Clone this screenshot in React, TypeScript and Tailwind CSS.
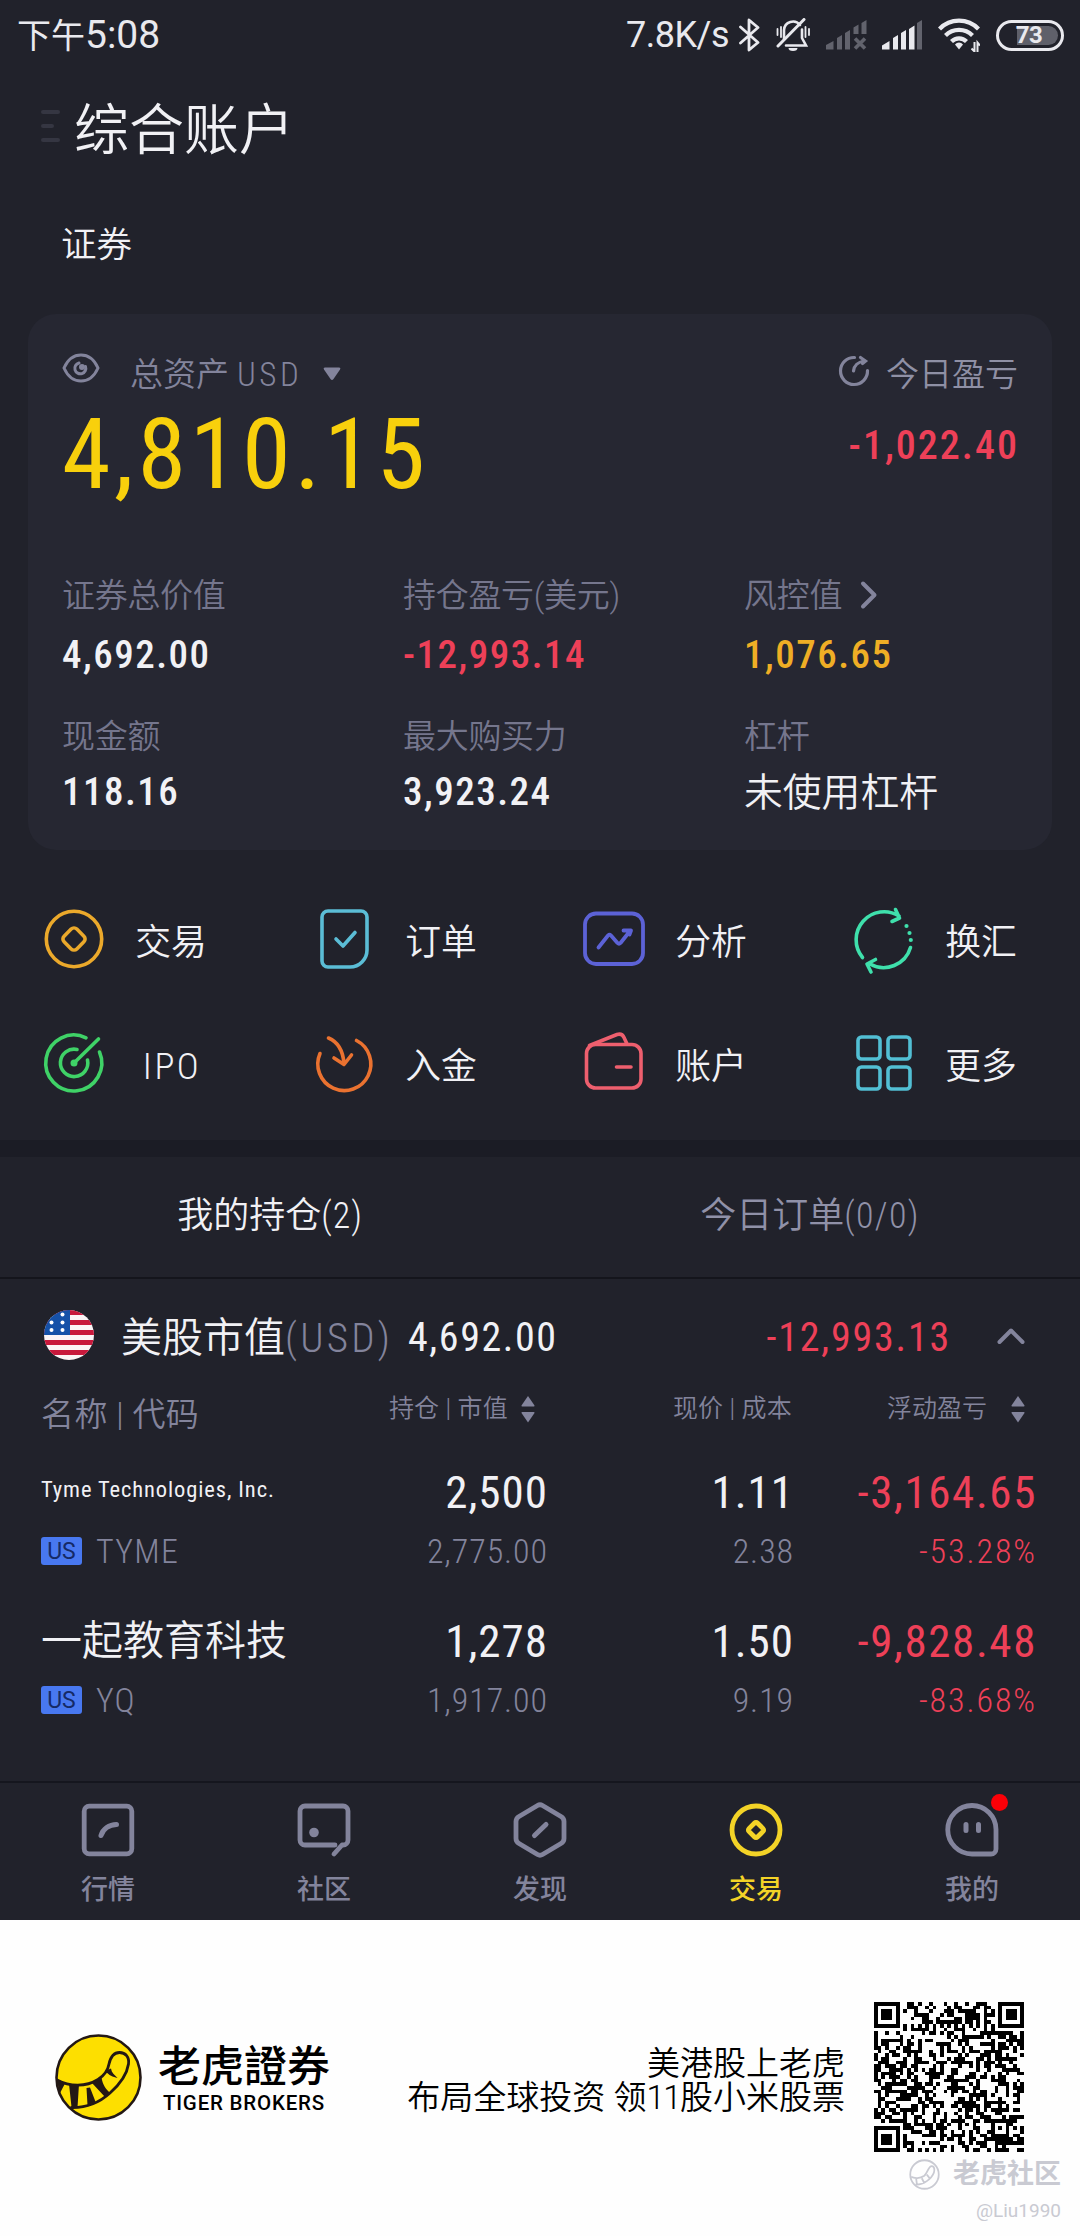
import React from "react";

const stats = [
  [
    { label: "证券总价值", value: "4,692.00", color: "text-[#f1f1f5]" },
    { label: "持仓盈亏(美元)", value: "-12,993.14", color: "text-[#ee4058]" },
    { label: "风控值", value: "1,076.65", color: "text-[#efae25]", arrow: true },
  ],
  [
    { label: "现金额", value: "118.16", color: "text-[#f1f1f5]" },
    { label: "最大购买力", value: "3,923.24", color: "text-[#f1f1f5]" },
    { label: "杠杆", value: "未使用杠杆", color: "text-[#f1f1f5]", plain: true },
  ],
];

const positions = [
  {
    name: "Tyme Technologies, Inc.",
    small: true,
    code: "TYME",
    amount: "2,500",
    market: "2,775.00",
    price: "1.11",
    cost: "2.38",
    profit: "-3,164.65",
    percent: "-53.28%",
  },
  {
    name: "一起教育科技",
    small: false,
    code: "YQ",
    amount: "1,278",
    market: "1,917.00",
    price: "1.50",
    cost: "9.19",
    profit: "-9,828.48",
    percent: "-83.68%",
  },
];

// icons of the shortcut grid, all on a 72x72 box
const TradeIcon = () => (
  <svg width="72" height="72" viewBox="0 0 72 72" fill="none" stroke="#eba92b" strokeWidth="3.6">
    <circle cx="36" cy="36" r="27.7" />
    <rect x="27" y="27" width="18" height="18" rx="4" transform="rotate(45 36 36)" />
  </svg>
);

const OrderIcon = () => (
  <svg width="72" height="72" viewBox="0 0 72 72" fill="none" stroke="#5bbdd6" strokeWidth="3.6" strokeLinecap="round" strokeLinejoin="round">
    <path d="M20 8h33a6 6 0 0 1 6 6v33a17 17 0 0 1-17 17H20a6 6 0 0 1-6-6V14a6 6 0 0 1 6-6z" />
    <path d="M28 36l7 7 12-13.500" />
  </svg>
);

const AnalysisIcon = () => (
  <svg width="72" height="72" viewBox="0 0 72 72" fill="none" stroke="#5c62d6" strokeWidth="3.8" strokeLinecap="round" strokeLinejoin="round">
    <rect x="7" y="10.500" width="58" height="50.500" rx="11" />
    <path d="M20.500 44.500l9.500-12q1.500-1.500 3 0l6.500 7.500q1.500 1.500 3 0L52 28M45.500 27.500h7.500l-1.500 4" />
  </svg>
);

const ExchangeIcon = () => (
  <svg width="72" height="72" viewBox="0 0 72 72" fill="none" stroke="#3fe0ac" strokeWidth="3.6" strokeLinecap="round" strokeLinejoin="round">
    <path d="M14.500 54.500A28 28 0 0 1 51 13M47.500 6.500l4 8.500-7.500 3.500" />
    <path d="M62.500 44.500A28 28 0 0 1 22 61M27.500 56.500l-8.500 4.500 4 8" />
    <path d="M58.500 23v.01M61.500 30v.01M62.800 37v.01" strokeWidth="4.200" />
  </svg>
);

const IpoIcon = () => (
  <svg width="72" height="72" viewBox="0 0 72 72" fill="none" stroke="#3fd267" strokeWidth="3.6" strokeLinecap="round">
    <path d="M48 10.800A28 28 0 1 0 61.500 25" />
    <path d="M39 22.500A13.700 13.700 0 1 0 49.500 33" />
    <path d="M36 36l24.500-24" />
    <circle cx="36" cy="36" r="3.500" fill="#3fd267" stroke="none" />
  </svg>
);

const DepositIcon = () => (
  <svg width="72" height="72" viewBox="0 0 72 72" fill="none" stroke="#ea7230" strokeWidth="3.6" strokeLinecap="round" strokeLinejoin="round">
    <path d="M12 26.500A26.500 26.500 0 1 0 48.500 13.500" />
    <path d="M20.500 11C30 15 35 24 36 36.500M26 31l10 6.500L43.500 28" />
  </svg>
);

const AccountIcon = () => (
  <svg width="72" height="72" viewBox="0 0 72 72" fill="none" stroke="#ee5f6e" strokeWidth="3.6" strokeLinecap="round" strokeLinejoin="round">
    <rect x="8.500" y="17.500" width="54.500" height="43.500" rx="9" />
    <path d="M11.500 18.500L39 7.500q5-1.500 7 3l3 6.500M38.500 40h14.500" />
  </svg>
);

const MoreIcon = () => (
  <svg width="72" height="72" viewBox="0 0 72 72" fill="none" stroke="#52bfd4" strokeWidth="3.6">
    <rect x="10" y="10" width="22" height="22" rx="3.500" />
    <rect x="40" y="10" width="22" height="22" rx="3.500" />
    <rect x="10" y="40" width="22" height="22" rx="3.500" />
    <rect x="40" y="40" width="22" height="22" rx="3.500" />
  </svg>
);

const shortcuts = [
  { title: "交易", icon: <TradeIcon /> },
  { title: "订单", icon: <OrderIcon /> },
  { title: "分析", icon: <AnalysisIcon /> },
  { title: "换汇", icon: <ExchangeIcon /> },
  { title: "IPO", icon: <IpoIcon /> },
  { title: "入金", icon: <DepositIcon /> },
  { title: "账户", icon: <AccountIcon /> },
  { title: "更多", icon: <MoreIcon /> },
];

// bottom navigation, icons on a 64x64 box
const tabs = [
  {
    title: "行情",
    icon: (
      <>
        <rect x="8.200" y="8.200" width="47.600" height="47.600" rx="5" />
        <path d="M25 37.500C27 31 33 26.500 40.500 26.500" strokeWidth="5" />
      </>
    ),
  },
  {
    title: "社区",
    icon: (
      <>
        <path d="M43 47H13a5 5 0 0 1-5-5V13a5 5 0 0 1 5-5h38a5 5 0 0 1 5 5v29a5 5 0 0 1-5 5h-1l-8 9" />
        <circle cx="22" cy="34.500" r="4.800" fill="#83849c" stroke="none" />
      </>
    ),
  },
  {
    title: "发现",
    icon: (
      <>
        <path d="M29.500 7.500q2.500-1.500 5 0l18.500 11q3 1.700 3 5v17q0 3.300-3 5l-18.500 11q-2.500 1.500-5 0L11 45.500q-3-1.700-3-5v-17q0-3.300 3-5z" />
        <path d="M26.500 37.500L38 26.500" strokeWidth="5" />
      </>
    ),
  },
  {
    title: "交易",
    active: true,
    icon: (
      <>
        <circle cx="32" cy="32" r="24" />
        <rect x="26" y="26" width="12" height="12" rx="2" transform="rotate(45 32 32)" />
      </>
    ),
  },
  {
    title: "我的",
    dot: true,
    icon: (
      <>
        <path d="M32 7.500A24 24 0 0 1 56 31.500V51a5 5 0 0 1-5 5H32A24.200 24.200 0 0 1 32 7.500z" />
        <path d="M26 26.500v6M38.500 26.500v6" strokeWidth="5" />
      </>
    ),
  },
];

const Sort = () => (
  <svg width="14" height="28" viewBox="0 0 14 28" fill="#83849c">
    <path d="M7 1l6.500 9.500a.8.8 0 0 1-.7 1H1.200a.8.8 0 0 1-.7-1z" />
    <path d="M7 27.500l6.500-9.500a.8.8 0 0 0-.7-1H1.200a.8.8 0 0 0-.7 1z" />
  </svg>
);

const Flag = () => (
  <svg width="50" height="50" viewBox="0 0 50 50">
    <clipPath id="flag">
      <circle cx="25" cy="25" r="25" />
    </clipPath>
    <g clipPath="url(#flag)">
      <rect width="50" height="50" fill="#fbf4f6" />
      <path d="M0 2.500h50M0 12.500h50M0 22.500h50M0 32.500h50M0 42.500h50" stroke="#c8193c" strokeWidth="5" />
      <rect width="26" height="25" fill="#1551a8" />
      <g fill="#ffffff">
        <circle cx="18.500" cy="4.500" r="2" />
        <circle cx="7.500" cy="12.500" r="2" />
        <circle cx="18.500" cy="12.500" r="2" />
        <circle cx="7.500" cy="20" r="2" />
        <circle cx="18.500" cy="20" r="2" />
      </g>
    </g>
  </svg>
);

const StatusIcons = () => (
  <>
    <svg width="21" height="34" viewBox="0 0 21 34" fill="none" stroke="#e9e9ee" strokeWidth="2.800" strokeLinejoin="round" strokeLinecap="round">
      <path d="M1.500 9L19 24.500 10 32V2l9 7.500L1.500 25" />
    </svg>
    <svg className="ml-4" width="34" height="34" viewBox="0 0 34 34" fill="none" stroke="#e9e9ee" strokeWidth="2.600" strokeLinecap="round">
      <path d="M8 21V12a9 9 0 0 1 16-5M26 11.500V20l4 7.500H10" />
      <path d="M2 28L28 1.500" strokeWidth="3" />
      <path d="M1.500 11v6M5 9v10M33 11v6M29.500 9v10" strokeWidth="1.800" />
      <path d="M12.500 30h9a4.500 3 0 0 1-9 0z" fill="#e9e9ee" stroke="none" />
    </svg>
    <svg className="ml-4" width="41" height="30" viewBox="0 0 41 30" fill="#62636d">
      <path d="M0 25l7.500-4v8.500H0zM11 18l5-3v14.500h-5zM19 13l5-3v19.500h-5zM27.500 7.500l5-3V14h-5zM35.500 3l5-3v14h-5z" />
      <path d="M29 18.500l10 10M39 18.500l-10 10" stroke="#62636d" strokeWidth="3.600" />
    </svg>
    <svg className="ml-[15px]" width="40" height="30" viewBox="0 0 40 30" fill="#e9e9ee">
      <path d="M0 25.500l7.500-4.500v8.500H0zM11 18l5-3v14.500h-5zM19 13l5-3v19.500h-5zM27 9l5.500-3.500v24H27z" />
      <path d="M35 3l5-3v29.500h-5z" fill="#62636d" />
    </svg>
    <svg className="ml-4" width="42" height="34" viewBox="0 0 42 34" fill="none" stroke="#e9e9ee" strokeWidth="4.200">
      <path d="M1.500 11a27 27 0 0 1 39 0M7.500 17.500a19 19 0 0 1 27 0M13.500 23.500a10.500 10.500 0 0 1 15 0" />
      <path d="M21 24.500a6 6 0 0 1 4 2l-4 5-4-5a6 6 0 0 1 4-2z" fill="#e9e9ee" stroke="none" />
      <path d="M36.500 24v9.500l-3-3M39.500 34v-9.500l2.500 3" strokeWidth="2" />
    </svg>
    <div className="relative ml-4 flex h-[31px] w-[68px] items-center justify-center rounded-full border-[3px] border-[#e9e9ee] p-[3px]">
      <div className="absolute top-[3px] right-[3px] h-[19px] w-[41px] rounded-r-full bg-[#5f606a]" />
      <span className="relative -ml-0.5 text-[24px] leading-none font-bold tracking-[-0.5px]">73</span>
    </div>
  </>
);

const TigerLogo = () => (
  <svg width="87" height="87" viewBox="0 0 87 87">
    <circle cx="43.500" cy="43.500" r="42" fill="#fddf00" stroke="#231815" strokeWidth="2.600" />
    <path d="M2 46C15 53 31 53 43 45.500C50 41 53 36 54 30C56 21 60 18.500 64.500 18.500C70.500 18.500 74.500 23 73.500 30C72 40 64 51 55 59C44 69 30 74 15.500 73.500" fill="none" stroke="#231815" strokeWidth="2.800" />
    <g fill="#231815">
      <path d="M2 45l8 4.500L4.500 60zM14 50h10l-1.500 23.500-6-.5zM31.500 54l3.500-.5 6 15.500-8.500 2.500zM37 49l9.500-5.500C48 52 51 55 55.500 59.500L50 63zM50 37l6-2.500c.5 4 3 6 6.500 9.500-5-1-8-2.500-12.500-7z" />
    </g>
  </svg>
);

const SIZE = 41;

// finder squares in three corners, alignment square at (34, 34), data in between
const isDark = (x: number, y: number, noise: number) => {
  const corners = [
    [0, 0],
    [SIZE - 7, 0],
    [0, SIZE - 7],
  ];
  for (const [cx, cy] of corners) {
    const d = Math.max(Math.abs(x - cx - 3), Math.abs(y - cy - 3));
    if (d <= 4) return d === 3 || d <= 1;
  }
  const a = Math.max(Math.abs(x - 34), Math.abs(y - 34));
  if (a <= 2) return a !== 1;
  if (y === 6) return x % 2 === 0;
  if (x === 6) return y % 2 === 0;
  return noise > 0.49;
};

const QrCode = () => {
  let seed = 4810;
  let d = "";
  for (let y = 0; y < SIZE; y++) {
    for (let x = 0; x < SIZE; x++) {
      seed = (seed * 16807) % 2147483647;
      if (isDark(x, y, seed / 2147483647)) d += `M${x} ${y}h1v1h-1z`;
    }
  }
  return (
    <svg width="150" height="150" viewBox="0 0 41 41" shapeRendering="crispEdges">
      <path d={d} fill="#000000" />
    </svg>
  );
};

export default function App() {
  return (
    <div className="w-[1080px] bg-[#21222b] font-[Roboto,'Noto_Sans_CJK_SC',sans-serif] text-[#f1f1f5]">
      <div className="flex h-[70px] items-center justify-between pr-4 pl-[17px] text-[#e9e9ee]">
        <div className="text-[39px] leading-none">
          <span className="text-[34px]">下午</span>5:08
        </div>
        <div className="flex items-center">
          <div className="w-[113px] text-[36px] leading-none tracking-[-0.5px] whitespace-nowrap">7.8K/s</div>
          <StatusIcons />
        </div>
      </div>

      <div className="flex h-[120px] items-center pl-[41px]">
        <div className="mt-[-8px] flex w-[33px] flex-col gap-[10px]">
          <div className="h-1 w-[19px] rounded bg-[#353642]" />
          <div className="h-1 w-[13px] rounded bg-[#353642]" />
          <div className="h-1 w-[19px] rounded bg-[#353642]" />
        </div>
        <h1 className="text-[55px] leading-none font-[350]">综合账户</h1>
      </div>

      <div className="flex h-[108px] items-center pt-[4px] pl-[61px] text-[35.500px] leading-none font-[350]">证券</div>

      {/* account card */}
      <div className="mx-7 mt-4 h-[536px] rounded-[28px] bg-[#262732] px-[34px] pt-[35px]">
        <div className="flex justify-between">
          <div>
            <div className="flex h-[50px] items-center text-[33px] leading-none font-[350] text-[#83849c]">
              <svg className="mt-[-12px]" width="38" height="30" viewBox="0 0 38 30" fill="none" stroke="#83849c" strokeWidth="3">
                <path d="M2 15C6 6 12 2 19 2s13 4 17 13c-4 9-10 13-17 13S6 24 2 15z" />
                <path d="M17 10a5.500 5.500 0 1 0 6.500 3.500" strokeLinecap="round" />
                <circle cx="20" cy="14" r="1.500" fill="#83849c" />
              </svg>
              <span className="ml-[30px]">
                总资产 <span className="font-light tracking-[3.500px] font-stretch-[75%]">USD</span>
              </span>
              <svg className="ml-[21px]" width="18" height="14" viewBox="0 0 18 14" fill="#83849c">
                <path d="M2 .5h14q2 0 1 2L10.500 12q-1.500 2-3 0L1 2.500q-1-2 1-2z" />
              </svg>
            </div>
            <div className="h-[109px] text-[98.500px] leading-[112px] tracking-[3.700px] font-stretch-[75%] text-[#f8d00c]">
              4,810.15
            </div>
          </div>
          <div className="text-right">
            <div className="flex h-[50px] items-center text-[33px] leading-none font-[350] text-[#8f90a5]">
              <svg className="mt-[-6px] mr-[16px]" width="32" height="32" viewBox="0 0 32 32" fill="none" stroke="#83849c" strokeWidth="3.200" strokeLinecap="round">
                <path d="M16.500 2.500A13.500 13.500 0 1 0 29.500 15.500" />
                <path d="M15.500 16C16 11 20 7 26 6M22.500 2.500L27.500 6l-3 2.500" />
              </svg>
              今日盈亏
            </div>
            <div className="-mr-px text-[40px] leading-[93px] font-medium tracking-[2px] font-stretch-[75%] text-[#ee4058]">
              -1,022.40
            </div>
          </div>
        </div>

        <div className="mt-[62px] flex flex-col gap-5">
          {stats.map((row, i) => (
            <div className="flex" key={i}>
              {row.map((item: any) => (
                <div className="w-[341px] shrink-0 last:w-[270px]" key={item.label}>
                  <div className="flex h-[50px] items-center text-[33px] leading-none font-[350] tracking-[-0.300px] whitespace-nowrap text-[#75768d]">
                    {item.label}
                    {item.arrow && (
                      <svg className="ml-[18px]" width="18" height="30" viewBox="0 0 18 30" fill="none" stroke="#83849c" strokeWidth="4" strokeLinecap="round" strokeLinejoin="round">
                        <path d="M3 3.500L14.500 15 3 26.500" />
                      </svg>
                    )}
                  </div>
                  <div
                    className={
                      (i === 0 ? "leading-[71px] " : "leading-[63px] ") +
                      (item.plain
                        ? "text-[38.800px] font-[350] "
                        : "text-[39px] font-medium tracking-[1.500px] font-stretch-[75%] ") +
                      item.color
                    }
                  >
                    {item.value}
                  </div>
                </div>
              ))}
            </div>
          ))}
        </div>
      </div>

      <div className="grid grid-cols-4 pt-[27px] pb-[15px]">
        {shortcuts.map((item) => (
          <div className="flex h-[124px] items-center pl-[38px]" key={item.title}>
            {item.icon}
            <div
              className={
                item.title === "IPO"
                  ? "ml-[26px] w-[72px] pt-[7px] text-center text-[37px] leading-none font-light tracking-[2.500px] font-stretch-[75%]"
                  : "ml-[25px] w-[72px] pt-[10px] text-center text-[35.800px] leading-none font-[350]"
              }
            >
              {item.title}
            </div>
          </div>
        ))}
      </div>

      <div className="h-[17px] bg-[#1b1c25]" />

      <div className="flex h-[122px] items-center border-b-2 border-[#14151c] pb-[3px] text-[36px] leading-none font-[350]">
        <div className="w-1/2 text-center">
          我的持仓<span className="tracking-[1px] font-stretch-[75%]">(2)</span>
        </div>
        <div className="w-1/2 text-center text-[#9091a8]">
          今日订单<span className="tracking-[1.300px] font-stretch-[75%]">(0/0)</span>
        </div>
      </div>

      {/* positions */}
      <div className="flex h-[106px] items-center pt-[12px] pl-11 text-[41px] leading-none">
        <div className="-mt-[6px]">
          <Flag />
        </div>
        <div className="ml-[27px] w-[287px] whitespace-nowrap">
          <span className="font-[350]">美股市值</span>
          <span className="font-light tracking-[3.200px] font-stretch-[75%] text-[#83849c]">(USD)</span>
        </div>
        <div className="text-[40px] tracking-[1.600px] font-stretch-[75%]">4,692.00</div>
        <div className="ml-auto text-[40px] tracking-[1.800px] font-stretch-[75%] text-[#ee4058]">-12,993.13</div>
        <svg className="mt-[-4px] mr-[54px] ml-[45px]" width="30" height="20" viewBox="0 0 30 20" fill="none" stroke="#83849c" strokeWidth="4" strokeLinecap="round" strokeLinejoin="round">
          <path d="M3.500 16L15 4.500 26.500 16" />
        </svg>
      </div>

      <div className="flex h-[50px] items-center pb-[3px] pl-[41px] text-[25px] leading-none font-[350] text-[#83849c]">
        <div className="w-[285px] pt-[12px] text-[33px] leading-none tracking-[0.400px]">名称 | 代码</div>
        <div className="flex w-[219px] items-center justify-end gap-[13px] pr-[10px] tracking-[0.200px]">
          持仓 | 市值 <Sort />
        </div>
        <div className="w-[247px] text-right tracking-[0.200px]">现价 | 成本</div>
        <div className="flex w-[244px] items-center justify-end gap-[24px] pr-[11px]">
          浮动盈亏 <Sort />
        </div>
      </div>

      <div className="mt-[28px] mb-[20px]">
        {positions.map((item) => (
          <div className="flex h-[149px] pl-[41px]" key={item.code}>
            <div className="w-[285px]">
              <div
                className={
                  item.small
                    ? "h-[60px] text-[22.500px] leading-[52px] tracking-[0.900px] font-stretch-[75%] whitespace-nowrap"
                    : "h-[60px] text-[41px] leading-[58px] font-[350] whitespace-nowrap"
                }
              >
                {item.name}
              </div>
              <div className="flex h-[56px] items-center gap-[14px]">
                <span className="flex h-7 w-[41px] items-center justify-center rounded-[3px] bg-[#4878f0] text-[23px] leading-none text-[#152a66]">
                  US
                </span>
                <span className="text-[34px] leading-none font-light tracking-[1.300px] font-stretch-[75%] text-[#83849c]">
                  {item.code}
                </span>
              </div>
            </div>
            <div className="w-[222px] text-right font-stretch-[75%]">
              <div className="text-[45px] leading-[60px] tracking-[1px]">{item.amount}</div>
              <div className="text-[34px] leading-[56px] font-light tracking-[0.900px] text-[#83849c]">{item.market}</div>
            </div>
            <div className="w-[246px] text-right font-stretch-[75%]">
              <div className="text-[45px] leading-[60px] tracking-[1px]">{item.price}</div>
              <div className="text-[34px] leading-[56px] font-light tracking-[0.900px] text-[#83849c]">{item.cost}</div>
            </div>
            <div className="w-[243px] text-right font-stretch-[75%] text-[#ee4058]">
              <div className="text-[45px] leading-[60px] tracking-[1.600px]">{item.profit}</div>
              <div className="text-[34px] leading-[56px] font-light tracking-[1.900px]">{item.percent}</div>
            </div>
          </div>
        ))}
      </div>

      <div className="flex h-[139px] border-t-2 border-[#15161e] pt-[15px]">
        {tabs.map((tab) => (
          <div
            className={
              tab.active
                ? "flex w-1/5 flex-col items-center text-[#f3d327]"
                : "flex w-1/5 flex-col items-center text-[#83849c]"
            }
            key={tab.title}
          >
            <div className="relative">
              <svg width="64" height="64" viewBox="0 0 64 64" fill="none" stroke="currentColor" strokeWidth="4.800" strokeLinecap="round" strokeLinejoin="round">
                {tab.icon}
              </svg>
              {tab.dot && <div className="absolute top-[-4px] right-[-4px] h-[17px] w-[17px] rounded-full bg-[#fb0007]" />}
            </div>
            <div className="mt-[8px] text-[27px] leading-10 font-medium">{tab.title}</div>
          </div>
        ))}
      </div>

      {/* share footer */}
      <div className="relative h-[316px] bg-[#fefefe] pt-[82px] text-black">
        <div className="flex h-[150px] items-center pr-14 pl-[55px]">
          <TigerLogo />
          <div className="ml-[16px] flex flex-col items-center pt-[6px]">
            <div className="text-[43px] leading-[46px] font-medium">老虎證券</div>
            <div className="text-[20.500px] leading-[26px] font-medium tracking-[0.800px]">TIGER BROKERS</div>
          </div>
          <div className="mr-[29px] ml-auto pt-[7px] text-right text-[33px] leading-[34px] font-[350]">
            <div>美港股上老虎</div>
            <div>
              布局全球投资 领<span className="tracking-[-1.500px]">11</span>股小米股票
            </div>
          </div>
          <QrCode />
        </div>
        <div className="absolute right-[19px] bottom-[7px] flex flex-col items-end text-[#c9cad2]">
          <div className="flex items-center gap-[13px] text-[27px] leading-[38px] font-bold">
            <svg width="31" height="31" viewBox="0 0 87 87" fill="none" stroke="#c9cad2" strokeWidth="5">
              <circle cx="43.500" cy="43.500" r="40" />
              <path d="M6 50C15 55 31 55 43 47C52 40 54 20 64 20C72 20 72 32 70 38C64 55 40 74 18 72M20 54l2 16M36 54l6 12M50 44l8 10" />
            </svg>
            老虎社区
          </div>
          <div className="text-[19px] leading-[36px]">@Liu1990</div>
        </div>
      </div>
    </div>
  );
}
